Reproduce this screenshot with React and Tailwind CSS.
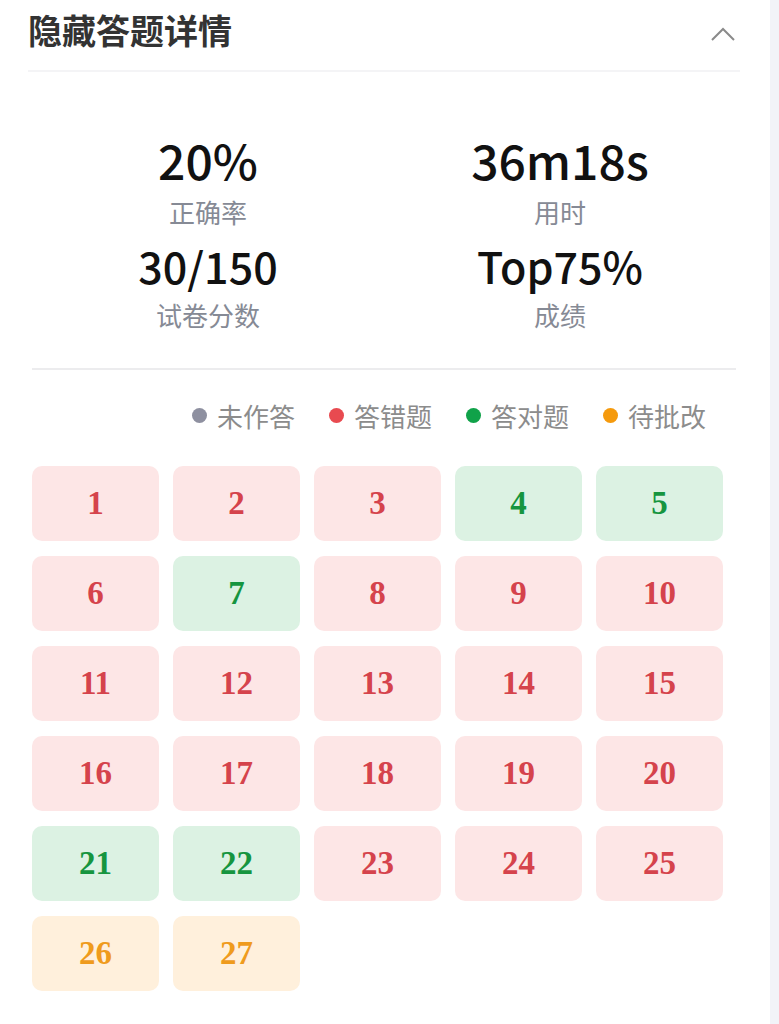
import React from "react";

const green = [4, 5, 7, 21, 22];
const orange = [26, 27];

function Cell({ n }) {
  if (green.includes(n)) {
    return (
      <div className="h-[75px] rounded-[10px] bg-[#dcf2e3] flex items-center justify-center text-[#16953f]">
        {n}
      </div>
    );
  }
  if (orange.includes(n)) {
    return (
      <div className="h-[75px] rounded-[10px] bg-[#fff0dc] flex items-center justify-center text-[#ef9b1d]">
        {n}
      </div>
    );
  }
  return (
    <div className="h-[75px] rounded-[10px] bg-[#fde6e6] flex items-center justify-center text-[#d5434c]">
      {n}
    </div>
  );
}

function Stat({ value, label, big }) {
  return (
    <div className="flex flex-col items-center">
      <div
        className={
          big
            ? "h-[56px] flex items-center text-[48px] font-medium text-[#111]"
            : "h-[50px] flex items-center text-[43px] font-medium text-[#111]"
        }
      >
        {value}
      </div>
      <div className="mt-[5px] text-[26px] leading-[40px] text-[#868a95]">{label}</div>
    </div>
  );
}

export default function App() {
  const nums = Array.from({ length: 27 }, (_, i) => i + 1);
  return (
    <div
      className="w-[779px] min-h-[1024px] bg-[#f2f3f8] flex"
      style={{ fontFamily: '"Noto Sans CJK SC", sans-serif' }}
    >
      <div className="w-[770px] min-h-[1024px] bg-white pl-[28px] pr-[30px]">
        <div className="h-[72px] border-b-2 border-[#f4f4f6] flex items-start justify-between pt-[4px]">
          <div className="text-[34px] leading-[52px] font-bold text-[#333]">隐藏答题详情</div>
          <svg width="26" height="16" viewBox="0 0 26 16" className="mt-[22px] mr-[4px]">
            <path d="M2 14 L13 3 L24 14" fill="none" stroke="#8a8a8a" strokeWidth="2" />
          </svg>
        </div>

        <div className="mx-[4px] pt-[59px] pb-[33px] border-b-2 border-[#ececee]">
          <div className="grid grid-cols-2 gap-y-[8px]">
            <Stat value="20%" label="正确率" big />
            <Stat value="36m18s" label="用时" big />
            <Stat value="30/150" label="试卷分数" />
            <Stat value="Top75%" label="成绩" />
          </div>
        </div>

        <div className="flex justify-end items-center gap-[34px] pr-[34px] mt-[25px] h-[40px] text-[26px] text-[#8c8c8c]">
          <div className="flex items-center gap-[10px]">
            <span className="w-[15px] h-[15px] rounded-full bg-[#8e90a0]"></span>
            <span>未作答</span>
          </div>
          <div className="flex items-center gap-[10px]">
            <span className="w-[15px] h-[15px] rounded-full bg-[#e84a50]"></span>
            <span>答错题</span>
          </div>
          <div className="flex items-center gap-[10px]">
            <span className="w-[15px] h-[15px] rounded-full bg-[#10a249]"></span>
            <span>答对题</span>
          </div>
          <div className="flex items-center gap-[10px]">
            <span className="w-[15px] h-[15px] rounded-full bg-[#f59a0d]"></span>
            <span>待批改</span>
          </div>
        </div>

        <div
          className="grid grid-cols-5 gap-x-[14px] gap-y-[15px] w-[691px] ml-[4px] mt-[31px] text-[33px] font-bold"
          style={{ fontFamily: '"Liberation Serif", serif' }}
        >
          {nums.map((n) => (
            <Cell key={n} n={n} />
          ))}
        </div>
      </div>
    </div>
  );
}
